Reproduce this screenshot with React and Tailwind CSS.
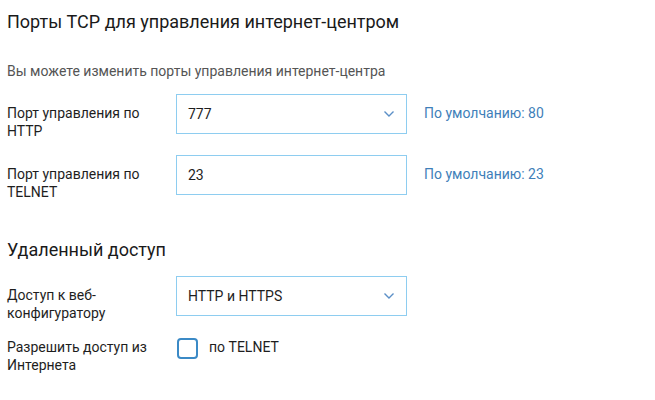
import React, { useState } from 'react';

const Chevron = () => (
  <svg className="w-[12px] h-[8px]" viewBox="0 0 12 8" fill="none">
    <path d="M1.5 1.5L6 6L10.5 1.5" stroke="#5b8fc7" strokeWidth="1.4" />
  </svg>
);

const Field = ({ value, select }) => (
  <div className="w-[231px] h-[40px] border border-[#8ecdf0] bg-white flex items-center justify-between pl-[11px] pr-[11px] text-[14px] text-[#1e1e1e]">
    <span>{value}</span>
    {select && <Chevron />}
  </div>
);

const Row = ({ label, children, hint }) => (
  <div className="flex items-start">
    <div className="w-[169px] pr-[12px] pt-[10px] text-[14px] leading-[18px] text-[#1e1e1e]">{label}</div>
    {children}
    {hint && <div className="pl-[17px] pt-[10px] text-[14px] leading-[18px] text-[#3f7fb9]">{hint}</div>}
  </div>
);

export default function App() {
  const [telnet, setTelnet] = useState(false);

  return (
    <div className="w-[655px] h-[400px] bg-white pl-[7px] pt-[10px]" style={{ fontFamily: 'Roboto, "Noto Sans", sans-serif' }}>
      <h2 className="text-[18px] leading-[24px] text-[#1a1a1a]">Порты TCP для управления интернет-центром</h2>
      <p className="mt-[28px] text-[14px] leading-[18px] text-[#555]">Вы можете изменить порты управления интернет-центра</p>

      <div className="mt-[14px] flex flex-col gap-[15px]">
        <Row label="Порт управления по HTTP" hint="По умолчанию: 80">
          <Field value="777" select />
        </Row>
        <Row label="Порт управления по TELNET" hint="По умолчанию: 23">
          <Field value="23" />
        </Row>
      </div>

      <h2 className="mt-[37px] text-[18px] leading-[24px] text-[#1a1a1a]">Удаленный доступ</h2>

      <div className="mt-[14px]">
        <Row label="Доступ к веб-конфигуратору">
          <Field value="HTTP и HTTPS" select />
        </Row>
      </div>

      <div className="mt-[16px] flex items-start">
        <div className="w-[169px] pr-[12px] text-[14px] leading-[18px] text-[#1e1e1e]">Разрешить доступ из Интернета</div>
        <label className="flex items-start gap-[11px] cursor-pointer">
          <button
            type="button"
            onClick={() => setTelnet(!telnet)}
            className="ml-[1px] w-[21px] h-[21px] rounded-[4px] border-2 border-[#3b8ac6] bg-white"
          />
          <span className="text-[14px] leading-[18px] text-[#1e1e1e]">по TELNET</span>
        </label>
      </div>
    </div>
  );
}
